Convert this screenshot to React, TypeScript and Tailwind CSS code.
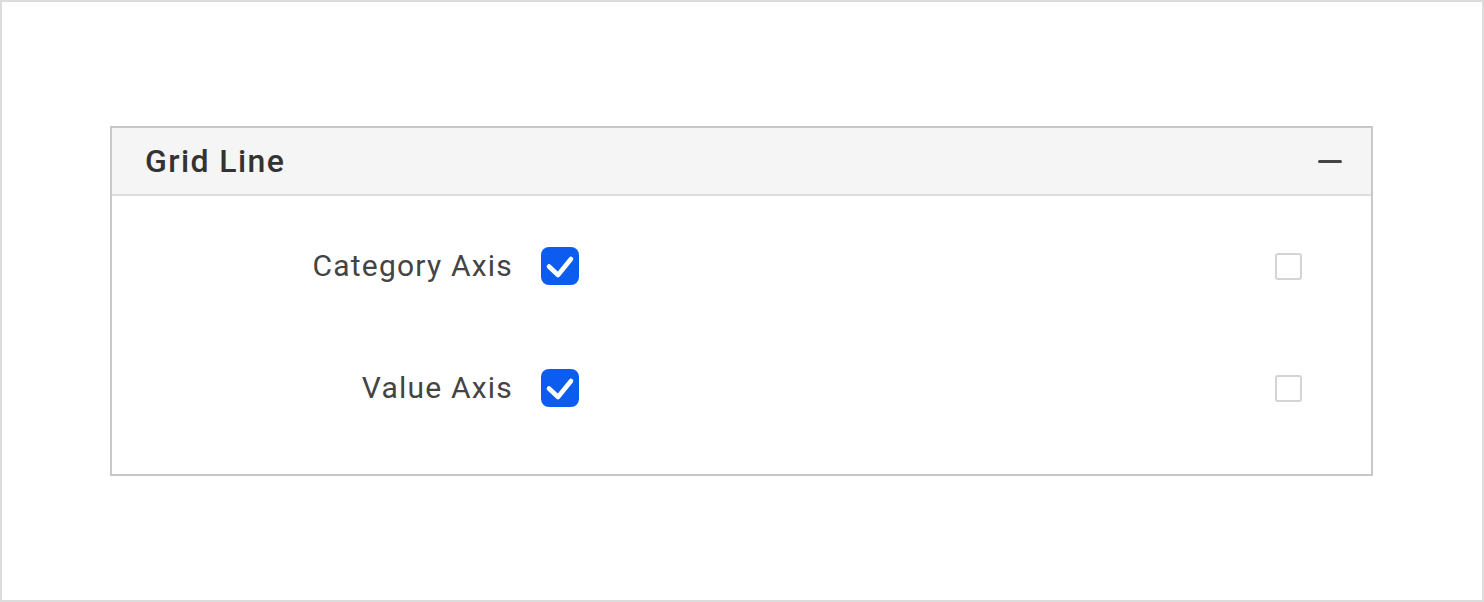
import React from "react";

function CheckedBox() {
  return (
    <div className="w-[38px] h-[38px] rounded-[8px] bg-[#0d5cf0]">
      <svg width="38" height="38" viewBox="0 0 38 38" fill="none">
        <path d="M8 19.5l9 8.5L30 12" stroke="#fff" strokeWidth="4.6" strokeLinecap="round" strokeLinejoin="round" />
      </svg>
    </div>
  );
}

function EmptyBox() {
  return <div className="w-[27px] h-[27px] rounded-[3px] border-2 border-[#d4d4d4] bg-white" />;
}

function Row({ label }: { label: string }) {
  return (
    <div className="flex items-center h-[60px]">
      <div className="w-[401px] text-right text-[30px] tracking-[1.2px] text-[#444] leading-none">{label}</div>
      <div className="ml-[28px]">
        <CheckedBox />
      </div>
      <div className="flex-1" />
      <div className="mr-[69px]">
        <EmptyBox />
      </div>
    </div>
  );
}

export default function App() {
  return (
    <div
      className="w-[1484px] h-[602px] border-2 border-[#dcdcdc] bg-white pt-[124px] pl-[108px]"
      style={{ fontFamily: "Roboto, 'Liberation Sans', sans-serif" }}
    >
      <div className="w-[1263px] h-[350px] border-2 border-[#c8c8c8] flex flex-col">
        <div className="h-[68px] bg-[#f5f5f5] border-b-2 border-[#dedede] flex items-center justify-between pl-[33px] pr-[29px]">
          <span className="text-[32px] tracking-[1.4px] font-medium text-[#333] leading-none">Grid Line</span>
          <div className="w-[24px] h-[3px] bg-[#444] rounded-full" />
        </div>
        <div className="flex flex-col pt-[40px] gap-[62px]">
          <Row label="Category Axis" />
          <Row label="Value Axis" />
        </div>
      </div>
    </div>
  );
}
